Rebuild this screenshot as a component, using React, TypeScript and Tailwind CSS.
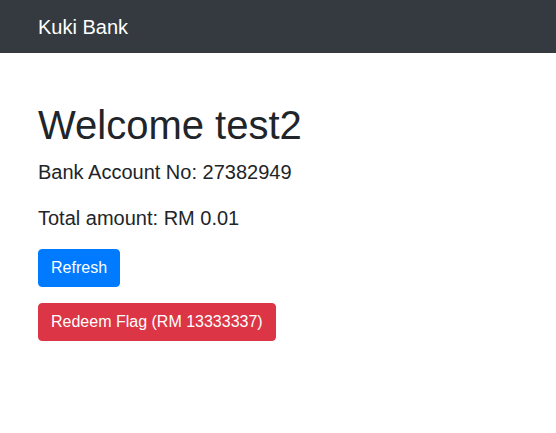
export default function App() {
  return (
    <div className="min-h-[433px] bg-white text-[#212529]" style={{ fontFamily: '"Liberation Sans", Arial, sans-serif' }}>
      <nav className="flex h-[53px] items-center bg-[#343a40] pl-[38px]">
        <span className="text-[20px] leading-[30px] text-white">Kuki Bank</span>
      </nav>
      <div className="pl-[38px] pt-[48px]">
        <h1 className="mb-2 text-[40px] font-normal leading-[48px]">Welcome test2</h1>
        <p className="mb-4 text-[20px] leading-[30px]">Bank Account No: 27382949</p>
        <p className="mb-4 text-[20px] leading-[30px]">Total amount: RM 0.01</p>
        <div className="mb-4">
          <button className="rounded border border-[#007bff] bg-[#007bff] px-3 py-1.5 text-[16px] leading-6 text-white">
            Refresh
          </button>
        </div>
        <div>
          <button className="rounded border border-[#dc3545] bg-[#dc3545] px-3 py-1.5 text-[16px] leading-6 text-white">
            Redeem Flag (RM 13333337)
          </button>
        </div>
      </div>
    </div>
  );
}
